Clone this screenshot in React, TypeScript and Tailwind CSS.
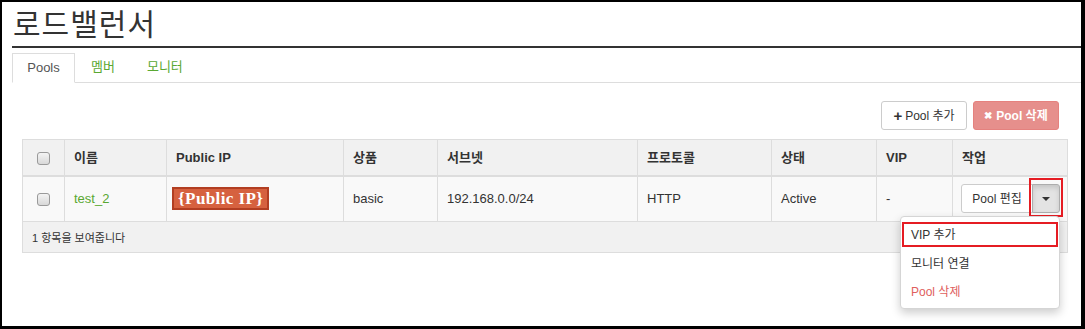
import React from "react";

const font = "font-['Liberation_Sans','Noto_Sans_CJK_KR',sans-serif]";

const cols = [42, 102, 177, 94, 200, 134, 105, 76, 115];

const Check = () => (
  <span className="inline-block w-[13px] h-[13px] rounded-[3px] border border-[#9a9a9a] bg-gradient-to-b from-[#f4f4f4] to-[#d8d8d8] align-middle" />
);

const App = () => {
  return (
    <div
      className={`${font} w-[1085px] h-[329px] box-border border-l-2 border-t-2 border-r-4 border-b-[3px] border-black bg-white text-[13px] text-[#333] overflow-hidden`}
    >
      <div className="pl-[10px]">
        {/* TITLE */}
        <h1 className="h-[46px] border-b-2 border-[#333] text-[30px] leading-[46px] font-normal text-[#333] pl-[1px] tracking-[1px]">
          로드밸런서
        </h1>

        {/* TABS */}
        <div className="mt-[5px] flex border-b border-[#ddd] h-[30px]">
          <div className="w-[63px] text-center h-[30px] leading-[28px] border border-[#ddd] border-b-white bg-white -mb-px text-[#555]">
            Pools
          </div>
          <div className="pl-[16px] pr-[15px] leading-[28px] text-[#5aa832]">멤버</div>
          <div className="pl-[17px] leading-[28px] text-[#5aa832]">모니터</div>
        </div>

        <div className="ml-[10px] mr-[14px]">
          {/* ACTIONS */}
          <div className="flex justify-end gap-[6px] mt-[18px] pr-[8px]">
            <button className="h-[29px] w-[86px] rounded-[3px] border border-[#ccc] bg-white text-[12px] text-[#333] flex items-center justify-center gap-[3px]">
              <span className="font-bold text-[15px] leading-none -mt-[1px]">+</span>
              Pool 추가
            </button>
            <button className="h-[29px] w-[86px] rounded-[3px] border border-[#e5817e] bg-[#e68f8c] text-[12px] text-white font-bold flex items-center justify-center gap-[4px]">
              <span className="text-[10px]">✖</span>
              Pool 삭제
            </button>
          </div>

          {/* TABLE */}
          <table className="mt-[9px] table-fixed border-collapse w-[1045px]">
            <colgroup>
              {cols.map((w, i) => (
                <col key={i} style={{ width: w }} />
              ))}
            </colgroup>
            <thead>
              <tr className="bg-[#f1f1f1] h-[36px] border-b-2 border-[#ddd]">
                <th className="border border-[#ddd] text-center">
                  <Check />
                </th>
                {["이름", "Public IP", "상품", "서브넷", "프로토콜", "상태", "VIP", "작업"].map((h) => (
                  <th key={h} className="border border-[#ddd] text-left font-bold pl-[9px] pt-[1px]">
                    {h}
                  </th>
                ))}
              </tr>
            </thead>
            <tbody>
              <tr className="bg-[#f9f9f9] h-[46px]">
                <td className="border border-[#ddd] text-center">
                  <Check />
                </td>
                <td className="border border-[#ddd] pl-[9px] text-[#5aa832]">test_2</td>
                <td className="border border-[#ddd] pl-[5px]">
                  <span className="inline-flex items-center h-[23px] px-[4px] bg-[#d6613f] border-2 border-[#b23e22] text-white font-bold text-[17px] font-['Liberation_Serif',serif] tracking-[0.4px]">
                    {"{Public IP}"}
                  </span>
                </td>
                <td className="border border-[#ddd] pl-[9px]">basic</td>
                <td className="border border-[#ddd] pl-[9px]">192.168.0.0/24</td>
                <td className="border border-[#ddd] pl-[9px]">HTTP</td>
                <td className="border border-[#ddd] pl-[9px]">Active</td>
                <td className="border border-[#ddd] pl-[9px]">-</td>
                <td className="border border-[#ddd] pl-[8px]">
                  <div className="relative flex items-center">
                    <button className="h-[29px] w-[72px] rounded-l-[3px] border border-[#ccc] bg-white text-[12px] text-[#333]">
                      Pool 편집
                    </button>
                    <div className="relative -ml-px">
                      <button className="h-[29px] w-[28px] rounded-r-[3px] border border-[#adadad] bg-[#e3e3e3] shadow-[inset_0_3px_5px_rgba(0,0,0,0.125)] flex items-center justify-center">
                        <span className="w-0 h-0 border-l-[4px] border-r-[4px] border-t-[4px] border-l-transparent border-r-transparent border-t-[#333]" />
                      </button>
                      <div className="absolute -left-[3px] -top-[6px] w-[34px] h-[39px] border-2 border-[#e51c23]" />
                      {/* DROPDOWN */}
                      <div className="absolute right-0 top-[32px] w-[160px] h-[93px] bg-white border border-[#d5d5d5] rounded-[4px] shadow-[0_4px_10px_rgba(0,0,0,0.2)] text-[12px] pt-[5px] z-10">
                        <div className="relative h-[28px] pl-[10px] leading-[26px]">
                          VIP 추가
                          <div className="absolute left-[1px] right-[1px] top-0 h-[25px] border-2 border-[#e51c23]" />
                        </div>
                        <div className="h-[28px] pl-[10px] leading-[28px]">모니터 연결</div>
                        <div className="h-[28px] pl-[10px] leading-[28px] text-[#e0605e]">Pool 삭제</div>
                      </div>
                    </div>
                  </div>
                </td>
              </tr>
              <tr className="bg-[#f1f1f1] h-[31px]">
                <td colSpan={9} className="border border-[#ddd] pl-[9px] pt-[2px] text-[11px]">
                  1 항목을 보여줍니다
                </td>
              </tr>
            </tbody>
          </table>
        </div>
      </div>
    </div>
  );
};

export default App;
